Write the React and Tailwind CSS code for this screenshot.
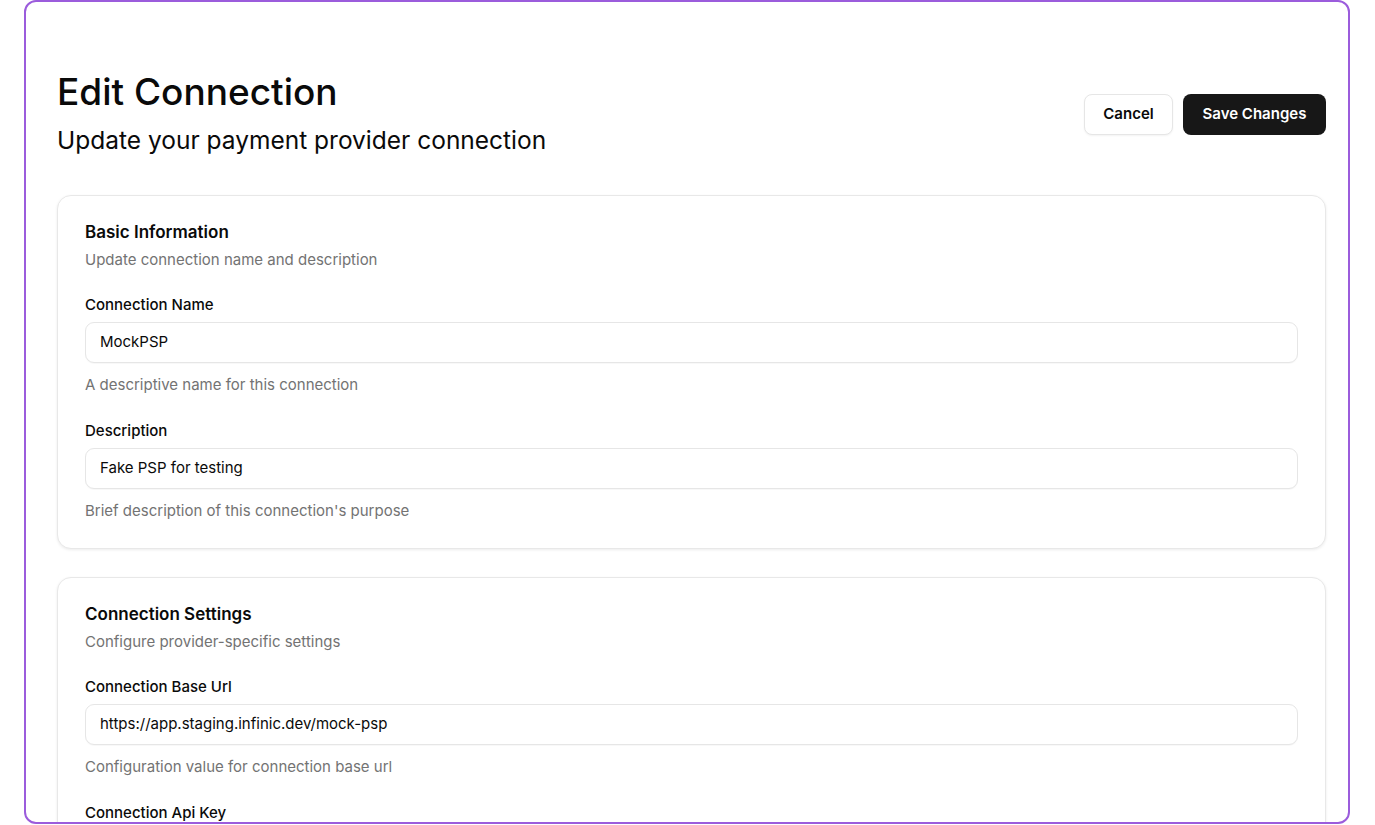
const Field = ({ label, value, help, className = "" }) => (
  <div className={className}>
    <label className="block text-[15px] leading-5 font-medium text-[#0a0a0a]">
      {label}
    </label>
    {value !== undefined && (
      <>
        <div className="mt-[7px] flex h-[41px] items-center rounded-[9px] border border-[#e6e6e6] bg-white px-[14px] text-[15px] text-[#0a0a0a] shadow-[0_1px_1px_rgba(0,0,0,0.03)]">
          {value}
        </div>
        <p className="mt-3 text-[15px] leading-5 text-[#737373]">{help}</p>
      </>
    )}
  </div>
);

const Card = ({ title, subtitle, children }) => (
  <div className="rounded-[14px] border border-[#e8e8e8] bg-white px-[27px] pt-6 pb-[27px] shadow-[0_1px_3px_rgba(0,0,0,0.08)]">
    <h2 className="text-[17px] leading-6 font-semibold text-[#0a0a0a]">{title}</h2>
    <p className="mt-[6px] text-[15px] leading-5 text-[#737373]">{subtitle}</p>
    <div className="mt-[25px] flex flex-col gap-[26px]">{children}</div>
  </div>
);

export default function App() {
  return (
    <div className="min-h-screen bg-white font-['Inter',sans-serif]">
      {/* ── Framed page ── */}
      <div className="ml-[24px] h-[824px] w-[1326px] overflow-hidden rounded-[12px] border-2 border-[#9b5cdc] bg-white pt-[70px] pl-[31px] pr-[22px]">

        {/* Header */}
        <div className="flex items-center justify-between">
          <div>
            <h1 className="text-[37px] leading-10 font-medium text-[#0a0a0a]">
              Edit Connection
            </h1>
            <p className="mt-3 text-[24.5px] leading-8 text-[#0a0a0a]">
              Update your payment provider connection
            </p>
          </div>
          <div className="flex items-center gap-[10px]">
            <button className="h-[41px] w-[89px] rounded-[8px] border border-[#e6e6e6] bg-white text-[15px] font-semibold text-[#0a0a0a] shadow-[0_1px_2px_rgba(0,0,0,0.05)]">
              Cancel
            </button>
            <button className="h-[41px] w-[143px] rounded-[8px] bg-[#171717] text-[15px] font-semibold text-white">
              Save Changes
            </button>
          </div>
        </div>

        {/* Cards */}
        <div className="mt-[39px] flex flex-col gap-7">
          <Card title="Basic Information" subtitle="Update connection name and description">
            <Field
              label="Connection Name"
              value="MockPSP"
              help="A descriptive name for this connection"
            />
            <Field
              label="Description"
              value="Fake PSP for testing"
              help="Brief description of this connection's purpose"
            />
          </Card>

          <Card title="Connection Settings" subtitle="Configure provider-specific settings">
            <Field
              label="Connection Base Url"
              value="https://app.staging.infinic.dev/mock-psp"
              help="Configuration value for connection base url"
            />
            <Field
              label="Connection Api Key"
              value=""
              help="Configuration value for connection api key"
            />
          </Card>
        </div>
      </div>
    </div>
  );
}
